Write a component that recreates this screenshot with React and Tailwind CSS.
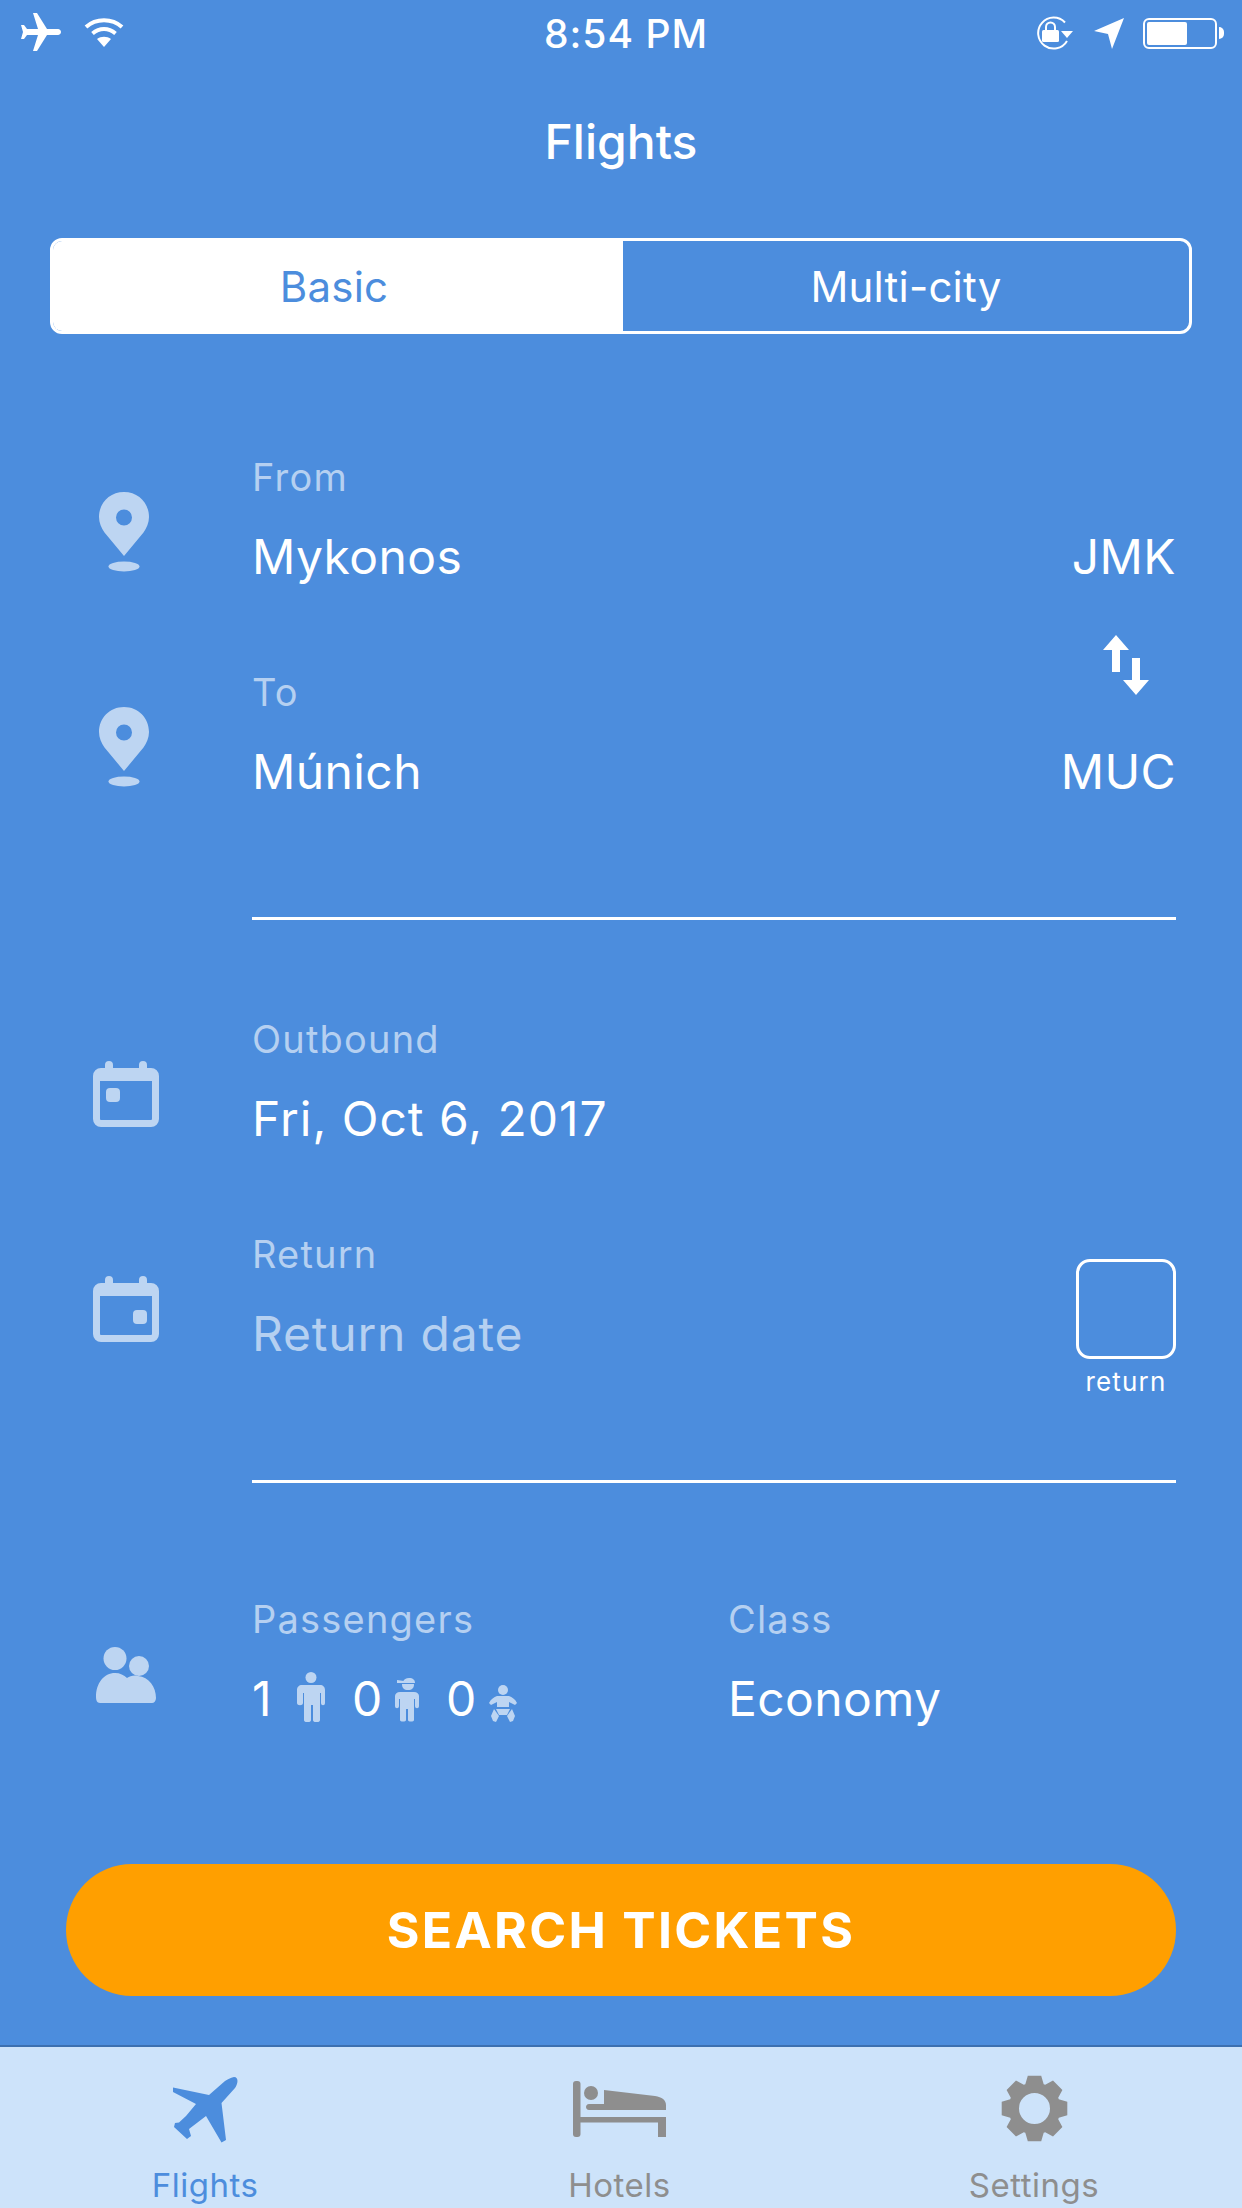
import React from "react";

const FONT = { fontFamily: "Inter, 'Noto Sans', sans-serif" };
const PLANE = "M21 16v-2l-8-5V3.5c0-.83-.67-1.5-1.5-1.5S10 2.67 10 3.5V9l-8 5v2l8-2.5V19l-2 1.5V22l3.5-1 3.5 1v-1.5L13 19v-5.5l8 2.5z";

function gearPath() {
  const cx = 33.5, cy = 33.5, n = 8;
  let d = "";
  for (let i = 0; i < n; i++) {
    const a = (i / n) * Math.PI * 2 - Math.PI / 2;
    const pts = [
      [26, a - 0.36],
      [33.5, a - 0.2],
      [33.5, a + 0.2],
      [26, a + 0.36],
    ];
    pts.forEach(([r, t], j) => {
      const x = (cx + r * Math.cos(t)).toFixed(1);
      const y = (cy + r * Math.sin(t)).toFixed(1);
      d += (i === 0 && j === 0 ? "M" : "L") + x + " " + y + " ";
    });
  }
  d += "Z M" + (cx + 15.5) + " " + cy + " A15.500 15.500 0 1 0 " + (cx - 15.5) + " " + cy + " A15.500 15.500 0 1 0 " + (cx + 15.5) + " " + cy + " Z";
  return d;
}

function Pin() {
  return (
    <svg width="52" height="80" viewBox="0 0 52 80" fill="#BDD5F2" className="block">
      <path fillRule="evenodd" d="M26 0C11.6 0 1 11 1 25c0 6 2.400 11 5.500 15.500L26 64l19.500-23.500C48.600 36 51 31 51 25 51 11 40.400 0 26 0zm0 17.500a8 8 0 1 1 0 16 8 8 0 0 1 0-16z" />
      <ellipse cx="26" cy="74.500" rx="15.500" ry="5" />
    </svg>
  );
}

function Calendar({ right }) {
  return (
    <svg width="66" height="66" viewBox="0 0 66 66" className="block">
      <path fill="#BDD5F2" fillRule="evenodd" d="M16 0a4 4 0 0 1 4 4v3h26V4a4 4 0 0 1 8 0v3h4a8 8 0 0 1 8 8v43a8 8 0 0 1-8 8H8a8 8 0 0 1-8-8V15a8 8 0 0 1 8-8h4V4a4 4 0 0 1 4-4zM7 20v38a1 1 0 0 0 1 1h50a1 1 0 0 0 1-1V20z" />
      <rect x={right ? 40 : 13} y={right ? 34 : 27} width="14" height="14" rx="4" fill="#BDD5F2" />
    </svg>
  );
}

function People() {
  return (
    <svg width="60" height="56" viewBox="0 0 60 56" fill="#BDD5F2" className="block">
      <circle cx="19" cy="11.500" r="11.500" />
      <circle cx="43" cy="19" r="10" />
      <path d="M0 50C0 36 8 26 19 26c5 0 9 2 12 5 3-2 7-3 11-2 11 1 18 11 18 22 0 3-2 5-4 5H4c-3 0-4-3-4-6z" />
    </svg>
  );
}

function Adult() {
  return (
    <svg width="28" height="50" viewBox="0 0 28 50" fill="#BDD5F2" className="block">
      <circle cx="14" cy="5.500" r="5.500" />
      <path d="M5 13h18c3 0 5 2 5 5v13c0 3-4 3-4 0V21h-1v27c0 3-7 3-7 0V33h-2v15c0 3-7 3-7 0V21H6v10c0 3-6 3-6 0V18c0-3 2-5 5-5z" />
    </svg>
  );
}

function Child() {
  return (
    <svg width="24" height="44" viewBox="0 0 24 44" fill="#BDD5F2" className="block">
      <path d="M8 4c1-3 3-4 6-4 4 0 6 2 6 5H7z" />
      <path d="M2 2l7 1v2H2z" />
      <path d="M7 6h12c0 4-2 6-6 6S7 10 7 6z" />
      <path d="M5 14h14c3 0 5 2 5 4v10c0 3-4 3-4 0v-7h-1v21c0 2-6 2-6 0V31h-2v11c0 2-6 2-6 0V21H4v7c0 3-4 3-4 0V18c0-2 2-4 5-4z" />
    </svg>
  );
}

function Baby() {
  return (
    <svg width="28" height="37" viewBox="0 0 28 37" fill="#BDD5F2" className="block">
      <circle cx="14" cy="5" r="5" />
      <path d="M8 11h12c3 1 6 3 8 7l-2 2-6-3v5H8v-5l-6 3-2-2c2-4 5-6 8-7z" />
      <path d="M7 24h14l-3 6h-8z" />
      <path d="M5 24l5 7-3 6-3-1-2-5zM23 24l-5 7 3 6 3-1 2-5z" />
    </svg>
  );
}

function Row({ icon, iconLeft, iconTop, label, value, valueClass }) {
  return (
    <div className="flex h-[132px]">
      <div className="w-[252px] shrink-0" style={{ paddingLeft: iconLeft, paddingTop: iconTop }}>{icon}</div>
      <Field label={label} value={value} valueClass={valueClass} />
    </div>
  );
}

function Field({ label, value, valueClass = "text-white tracking-[0.4px]" }) {
  return (
    <div>
      <div className="h-[44px] text-[38px] leading-[44px] tracking-[1.2px] text-[#B5D0F1]">{label}</div>
      <div className={"mt-[28px] h-[60px] text-[48px] leading-[60px] " + valueClass}>{value}</div>
    </div>
  );
}

function Divider() {
  return <div className="ml-[252px] mr-[66px] h-[3px] bg-white" />;
}

function Tab({ icon, label, color }) {
  return (
    <div className="flex w-[300px] flex-col items-center">
      <div className="flex h-[67px] items-center">{icon}</div>
      <div className="mt-[23px] text-[33px] leading-[40px] tracking-[0.5px]" style={{ color }}>{label}</div>
    </div>
  );
}

export default function App() {
  return (
    <div className="flex h-[2208px] w-[1242px] flex-col overflow-hidden bg-[#4C8DDD]" style={FONT}>
      {/* status bar */}
      <div className="flex h-[66px] shrink-0 items-center justify-between pl-[20px] pr-[18px]">
        <div className="flex w-[300px] items-center gap-[22px]">
          <svg width="42" height="40" viewBox="2 2 20 20" fill="#fff" className="block rotate-90">
            <path d={PLANE} />
          </svg>
          <svg width="40" height="30" viewBox="0 0 40 30" fill="none" stroke="#fff" strokeWidth="4" className="block">
            <path d="M2 9C12 0 28 0 38 9" />
            <path d="M8.500 15.500c7-6 16-6 23 0" />
            <path d="M20 29l-7-8c4-3 10-3 14 0z" fill="#fff" stroke="none" />
          </svg>
        </div>
        <div className="pl-[8px] pt-[2px] text-[39px] font-medium leading-[44px] tracking-[1px] text-white">8:54 PM</div>
        <div className="flex w-[300px] items-center justify-end gap-[19px]">
          <svg width="41" height="34" viewBox="0 0 41 34" fill="none" className="block">
            <path d="M33 25A15.500 15.500 0 1 1 31 6.500" stroke="#fff" strokeWidth="2" />
            <path d="M27 15l6 7 6-7z" fill="#fff" />
            <rect x="8" y="14" width="17" height="12" rx="1.500" fill="#fff" />
            <path d="M12 14v-3a4.500 4.500 0 0 1 9 0v3" stroke="#fff" strokeWidth="2" />
          </svg>
          <svg width="30" height="31" viewBox="0 0 30 31" fill="#fff" className="block">
            <path d="M30 0L18 31l-4-15L0 13z" />
          </svg>
          <div className="flex items-center">
            <div className="flex h-[31px] w-[74px] rounded-[6px] border-2 border-white p-[2px]">
              <div className="h-full w-[40px] rounded-[2px] bg-white" />
            </div>
            <div className="ml-[2px] h-[12px] w-[5px] rounded-r-full bg-white" />
          </div>
        </div>
      </div>

      {/* title */}
      <div className="flex h-[152px] shrink-0 items-center justify-center text-[48px] font-medium text-white">Flights</div>

      {/* segmented */}
      <div className="mx-[50px] mt-[20px] flex h-[96px] shrink-0 overflow-hidden rounded-[12px] border-[3px] border-white text-[42px] tracking-[0.2px]">
        <div className="flex w-[570px] items-center justify-center bg-white pr-[8px] text-[#4C8DDD]">Basic</div>
        <div className="flex flex-1 items-center justify-center text-white">Multi-city</div>
      </div>

      {/* stations */}
      <div className="mt-[121px] flex h-[347px] shrink-0 justify-between pr-[66px]">
        <div className="flex flex-col gap-[83px]">
          <Row icon={<Pin />} iconLeft={98} iconTop={37} label="From" value="Mykonos" />
          <Row icon={<Pin />} iconLeft={98} iconTop={37} label="To" value="Múnich" />
        </div>
        <div className="flex flex-col items-end pt-[72px]">
          <div className="h-[60px] text-[48px] leading-[60px] tracking-[0.4px] text-white">JMK</div>
          <svg width="46" height="60" viewBox="0 0 46 60" fill="#fff" className="mt-[48px] mr-[27px] block">
            <path d="M13 0l13 15h-9v22H9V15H0z" />
            <path d="M29 23h8v22h9L33 60 20 45h9z" />
          </svg>
          <div className="mt-[47px] h-[60px] text-[48px] leading-[60px] tracking-[0.4px] text-white">MUC</div>
        </div>
      </div>
      <div className="mt-[115px] shrink-0"><Divider /></div>

      {/* dates */}
      <div className="mt-[97px] flex shrink-0 justify-between pr-[66px]">
        <div className="flex flex-col gap-[83px]">
          <Row icon={<Calendar />} iconLeft={93} iconTop={44} label="Outbound" value="Fri, Oct 6, 2017" valueClass="text-white tracking-[1px]" />
          <Row icon={<Calendar right />} iconLeft={93} iconTop={44} label="Return" value="Return date" valueClass="text-[#B5D0F1] tracking-[0.8px]" />
        </div>
        <div className="flex flex-col items-center pt-[242px]">
          <div className="h-[100px] w-[100px] shrink-0 rounded-[14px] border-[3px] border-white" />
          <div className="mt-[8px] text-[26px] leading-[30px] tracking-[1.2px] text-white">return</div>
        </div>
      </div>
      <div className="mt-[83px] shrink-0"><Divider /></div>

      {/* passengers */}
      <div className="mt-[114px] flex h-[132px] shrink-0">
        <div className="w-[252px] shrink-0 pl-[96px] pt-[50px]"><People /></div>
        <div className="w-[476px] shrink-0">
          <div className="h-[44px] text-[38px] leading-[44px] tracking-[1.2px] text-[#B5D0F1]">Passengers</div>
          <div className="relative mt-[28px] flex h-[60px] items-end text-[48px] leading-[60px] text-white">
            <span className="w-[45px]">1</span>
            <span className="w-[55px] pb-[7px]"><Adult /></span>
            <span className="w-[43px]">0</span>
            <span className="w-[51px] pb-[7px]"><Child /></span>
            <span className="w-[43px]">0</span>
            <span className="pb-[7px]"><Baby /></span>
          </div>
        </div>
        <Field label="Class" value="Economy" />
      </div>

      {/* button */}
      <div className="mx-[66px] mt-[135px] flex h-[132px] shrink-0 items-center justify-center rounded-full bg-[#FF9F00] text-[50px] font-bold tracking-[2.3px] text-white">
        SEARCH TICKETS
      </div>

      {/* tab bar */}
      <div className="mt-[49px] flex flex-1 justify-between border-t-2 border-[#3C70B0] bg-[#CDE3FA] pl-[55px] pr-[58px] pt-[28px]">
        <Tab
          label="Flights"
          color="#4C8DDD"
          icon={
            <svg width="68" height="68" viewBox="12 9 68 68" fill="#4C8DDD" className="block">
              <path d="M75 11C71 12 69 13 66 15L50 29 14 21.500V26L37 38 27 50 20 56.500 16 57 15 61 28 73 32 70 30 63 47 50 62.500 76.500 67 74 62.500 37 76 22C79 18 80 11 75 11Z" />
            </svg>
          }
        />
        <Tab
          label="Hotels"
          color="#8E8E8E"
          icon={
            <svg width="93" height="56" viewBox="13 10 93 56" fill="#8E8E8E" className="block">
              <rect x="13" y="10" width="7.500" height="56" rx="3" />
              <circle cx="31" cy="22" r="7" />
              <path d="M44 19L95 25C102 26 106 29 106 34V39H29C25 39 25 33 29 33H44Z" />
              <rect x="20" y="46" width="86" height="5.500" />
              <rect x="98" y="46" width="8" height="20" />
            </svg>
          }
        />
        <Tab
          label="Settings"
          color="#8E8E8E"
          icon={
            <svg width="67" height="67" viewBox="0 0 67 67" fill="#8E8E8E" className="block">
              <path fillRule="evenodd" d={gearPath()} />
            </svg>
          }
        />
      </div>
    </div>
  );
}
